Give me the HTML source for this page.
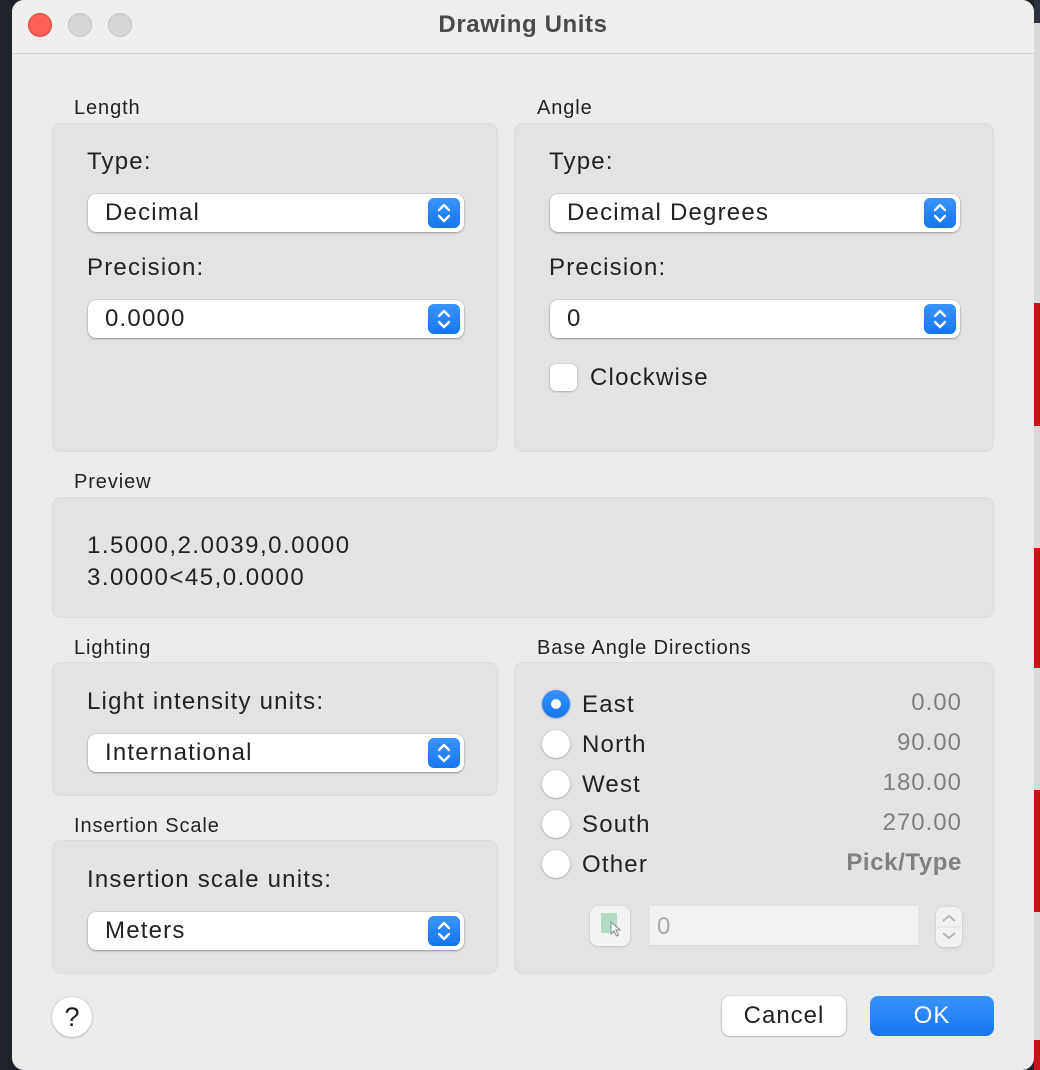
<!DOCTYPE html>
<html><head><meta charset="utf-8"><style>
*{margin:0;padding:0;box-sizing:border-box}
body{width:1040px;height:1070px;overflow:hidden;background:#1d222b;font-family:"Liberation Sans",sans-serif;position:relative;color:#222}
.strip{position:absolute;left:1034px;width:6px}
.dlg{position:absolute;left:12px;top:0;width:1022px;height:1070px;background:#ececec;border-radius:12px 12px 12px 12px;overflow:hidden}
.tb{position:absolute;left:0;top:0;width:100%;height:54px;background:#efefee;border-bottom:1px solid #d2d2d2}
.tl{position:absolute;top:13px;width:24px;height:24px;border-radius:50%;background:#d6d6d6;border:1px solid #c4c4c4}
.title{position:absolute;top:11px;left:0;width:100%;text-align:center;font-weight:bold;font-size:24px;letter-spacing:.6px;color:#4a4a4a}
.a{position:absolute}
.lbl{position:absolute;font-size:20px;letter-spacing:.9px;color:#222}
.box{position:absolute;background:#e3e3e3;border:1px solid #dcdcdc;border-radius:9px}
.t{position:absolute;font-size:24px;letter-spacing:1.2px;color:#222}
.sel{position:absolute;height:38px;background:#fff;border-radius:8px;box-shadow:0 1px 2px rgba(0,0,0,.3),0 0 0 .5px rgba(0,0,0,.12);font-size:24px;letter-spacing:1.2px;padding-left:17px;line-height:38px;color:#222}
.st{position:absolute;right:4px;top:4px;width:32px;height:30px;border-radius:6px;background:linear-gradient(#3b93fb,#1676f0)}
.rad{position:absolute;left:529px;width:28px;height:28px;border-radius:50%;background:#fff;box-shadow:0 0.5px 2px rgba(0,0,0,.35)}
.rl{position:absolute;left:570px;font-size:24px;letter-spacing:1.2px;color:#222}
.rv{position:absolute;right:73px;font-size:24px;letter-spacing:1px;color:#808080;text-align:right}
</style></head><body>
<div class="strip" style="top:0;height:23px;background:#2a3240"></div>
<div class="strip" style="top:23px;height:280px;background:#d9d9d9"></div>
<div class="strip" style="top:303px;height:123px;background:#d10d19"></div>
<div class="strip" style="top:426px;height:122px;background:#d9d9d9"></div>
<div class="strip" style="top:548px;height:120px;background:#d10d19"></div>
<div class="strip" style="top:668px;height:122px;background:#d9d9d9"></div>
<div class="strip" style="top:790px;height:122px;background:#d10d19"></div>
<div class="strip" style="top:912px;height:128px;background:#d9d9d9"></div>
<div class="strip" style="top:1040px;height:30px;background:#d10d19"></div>
<div class="dlg">
<div class="tb"></div>
<div class="tl" style="left:16px;background:#fe5f57;border-color:#e0443e"></div>
<div class="tl" style="left:56px"></div>
<div class="tl" style="left:96px"></div>
<div class="title">Drawing Units</div>
</div>
<div class="lbl" style="left:74px;top:97px">Length</div>
<div class="box" style="left:52px;top:123px;width:446px;height:329px"></div>
<div class="lbl" style="left:537px;top:97px">Angle</div>
<div class="box" style="left:514px;top:123px;width:480px;height:329px"></div>

<div class="t" style="left:87px;top:148px">Type:</div>
<div class="sel" style="left:88px;top:194px;width:376px">Decimal<div class="st"><svg width="32" height="30" viewBox="0 0 32 30"><path d="M11 12l5-5 5 5M11 18l5 5 5-5" stroke="#fff" stroke-width="2.4" fill="none" stroke-linecap="round" stroke-linejoin="round"/></svg></div></div>
<div class="t" style="left:87px;top:254px">Precision:</div>
<div class="sel" style="left:88px;top:300px;width:376px">0.0000<div class="st"><svg width="32" height="30" viewBox="0 0 32 30"><path d="M11 12l5-5 5 5M11 18l5 5 5-5" stroke="#fff" stroke-width="2.4" fill="none" stroke-linecap="round" stroke-linejoin="round"/></svg></div></div>

<div class="t" style="left:549px;top:148px">Type:</div>
<div class="sel" style="left:550px;top:194px;width:410px">Decimal Degrees<div class="st"><svg width="32" height="30" viewBox="0 0 32 30"><path d="M11 12l5-5 5 5M11 18l5 5 5-5" stroke="#fff" stroke-width="2.4" fill="none" stroke-linecap="round" stroke-linejoin="round"/></svg></div></div>
<div class="t" style="left:549px;top:254px">Precision:</div>
<div class="sel" style="left:550px;top:300px;width:410px">0<div class="st"><svg width="32" height="30" viewBox="0 0 32 30"><path d="M11 12l5-5 5 5M11 18l5 5 5-5" stroke="#fff" stroke-width="2.4" fill="none" stroke-linecap="round" stroke-linejoin="round"/></svg></div></div>
<div class="a" style="left:550px;top:364px;width:27px;height:27px;background:#fff;border-radius:6px;box-shadow:0 .5px 2px rgba(0,0,0,.35)"></div>
<div class="t" style="left:590px;top:364px">Clockwise</div>

<div class="lbl" style="left:74px;top:471px">Preview</div>
<div class="box" style="left:52px;top:497px;width:942px;height:121px"></div>
<div class="t" style="left:87px;top:532px;letter-spacing:1.5px">1.5000,2.0039,0.0000</div>
<div class="t" style="left:87px;top:564px;letter-spacing:1.5px">3.0000&lt;45,0.0000</div>

<div class="lbl" style="left:74px;top:637px">Lighting</div>
<div class="box" style="left:52px;top:662px;width:446px;height:134px"></div>
<div class="t" style="left:87px;top:688px">Light intensity units:</div>
<div class="sel" style="left:88px;top:734px;width:376px">International<div class="st"><svg width="32" height="30" viewBox="0 0 32 30"><path d="M11 12l5-5 5 5M11 18l5 5 5-5" stroke="#fff" stroke-width="2.4" fill="none" stroke-linecap="round" stroke-linejoin="round"/></svg></div></div>

<div class="lbl" style="left:74px;top:815px">Insertion Scale</div>
<div class="box" style="left:52px;top:840px;width:446px;height:134px"></div>
<div class="t" style="left:87px;top:866px">Insertion scale units:</div>
<div class="sel" style="left:88px;top:912px;width:376px">Meters<div class="st"><svg width="32" height="30" viewBox="0 0 32 30"><path d="M11 12l5-5 5 5M11 18l5 5 5-5" stroke="#fff" stroke-width="2.4" fill="none" stroke-linecap="round" stroke-linejoin="round"/></svg></div></div>

<div class="lbl" style="left:537px;top:637px">Base Angle Directions</div>
<div class="box" style="left:514px;top:662px;width:480px;height:312px"></div>
<div class="rad" style="left:542px;top:690px;background:linear-gradient(#3a92fb,#1575f0)"><div style="position:absolute;left:9px;top:9px;width:10px;height:10px;border-radius:50%;background:#fff"></div></div>
<div class="rad" style="left:542px;top:730px"></div>
<div class="rad" style="left:542px;top:770px"></div>
<div class="rad" style="left:542px;top:810px"></div>
<div class="rad" style="left:542px;top:850px"></div>
<div class="rl" style="left:582px;top:691px">East</div>
<div class="rl" style="left:582px;top:731px">North</div>
<div class="rl" style="left:582px;top:771px">West</div>
<div class="rl" style="left:582px;top:811px">South</div>
<div class="rl" style="left:582px;top:851px">Other</div>
<div class="rv" style="right:78px;top:689px">0.00</div>
<div class="rv" style="right:78px;top:729px">90.00</div>
<div class="rv" style="right:78px;top:769px">180.00</div>
<div class="rv" style="right:78px;top:809px">270.00</div>
<div class="rv" style="right:78px;top:849px;font-weight:bold;letter-spacing:.6px">Pick/Type</div>
<div class="a" style="left:590px;top:906px;width:40px;height:40px;background:#f3f3f3;border-radius:8px;box-shadow:0 .5px 2px rgba(0,0,0,.2)"><div style="position:absolute;left:11px;top:7px;width:16px;height:20px;background:#b4dcc4"></div><svg style="position:absolute;left:20px;top:15px" width="12" height="16" viewBox="0 0 12 16"><path d="M1 1v12l3-3 2.5 5 2-1-2.5-5h4z" fill="#fff" stroke="#888" stroke-width="1"/></svg></div>
<div class="a" style="left:650px;top:906px;width:268px;height:40px;background:#f2f2f2;border-bottom:1px solid #d8d8d8;font-size:24px;color:#aaa;padding-left:7px;line-height:42px">0</div>
<div class="a" style="left:936px;top:907px;width:26px;height:40px;background:#f2f2f2;border-radius:7px;box-shadow:0 .5px 2px rgba(0,0,0,.2)"><svg width="26" height="40" viewBox="0 0 26 40"><path d="M7 14l6-5 6 5M7 26l6 5 6-5" stroke="#b5b5b5" stroke-width="2" fill="none"/><path d="M1 20h24" stroke="#ddd"/></svg></div>

<div class="a" style="left:52px;top:997px;width:40px;height:40px;border-radius:50%;background:#fff;box-shadow:0 .5px 2px rgba(0,0,0,.35);text-align:center;font-size:27px;line-height:40px;color:#222">?</div>
<div class="a" style="left:722px;top:996px;width:124px;height:40px;border-radius:8px;background:#fff;box-shadow:0 .5px 2px rgba(0,0,0,.35);text-align:center;font-size:24px;letter-spacing:1px;line-height:40px;color:#222">Cancel</div>
<div class="a" style="left:870px;top:996px;width:124px;height:40px;border-radius:8px;background:linear-gradient(#3a92fb,#1777f2);text-align:center;font-size:24px;letter-spacing:1px;line-height:40px;color:#fff">OK</div>
</body></html>
